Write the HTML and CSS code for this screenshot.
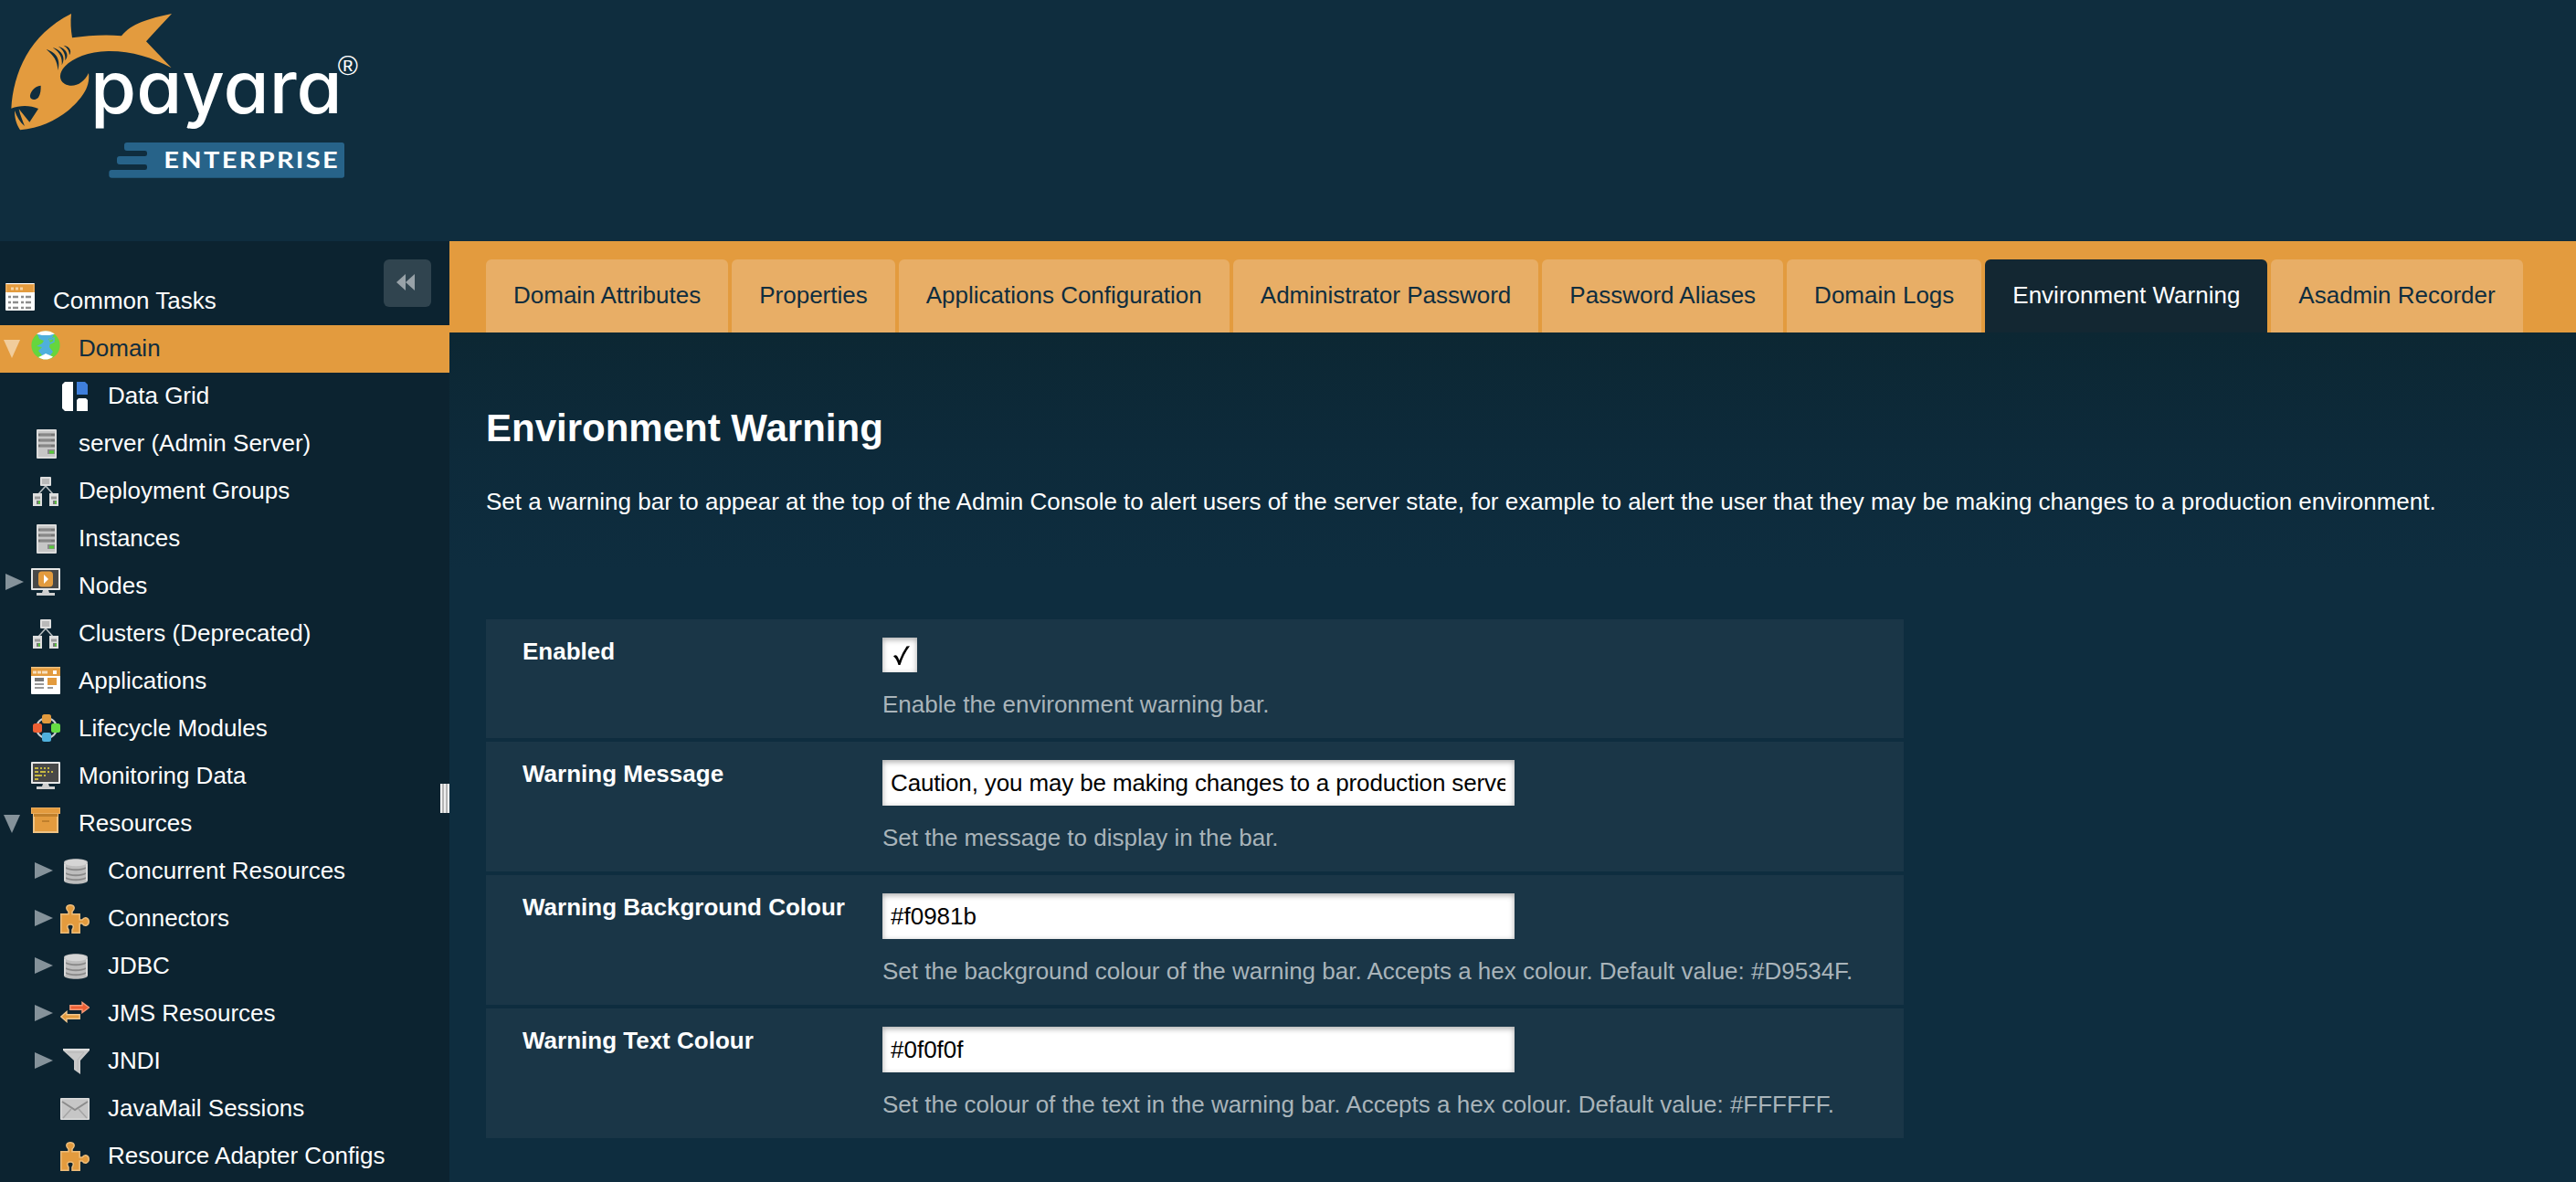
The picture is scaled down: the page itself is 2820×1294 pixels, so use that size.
FILE: index.html
```html
<!DOCTYPE html>
<html lang="en">
<head>
<meta charset="utf-8">
<title>Environment Warning</title>
<link rel="stylesheet" href="styles.css">
</head>
<body>
<svg class="sprite" aria-hidden="true">
  <symbol id="open" viewBox="0 0 34 32"><path d="M4 10H22L13 30Z" fill="currentColor"/></symbol>
  <symbol id="closed" viewBox="0 0 34 32"><path d="M6 6L26 15L6 24Z" fill="currentColor"/></symbol>
  <symbol id="tasks" viewBox="0 0 32 32">
    <rect y="0" width="32" height="30" rx="1" fill="#fff"/><path d="M0 1H32V10H0Z" fill="#e8a95a"/><path d="M2 2H30V10H2Z" fill="#e39b3e"/>
    <path d="M6 6h3M11 6h3M16 6h3" stroke="#f3d3a4" stroke-width="3"/>
    <path d="M3 15h3M8 15h6M17 15h3M22 15h6M3 21h3M8 21h6M17 21h3M22 21h6M3 27h3M8 27h6M17 27h3M22 27h6" stroke="#8d8d8d" stroke-width="2.6"/>
  </symbol>
  <symbol id="globe" viewBox="0 0 32 32">
    <circle cx="16" cy="16" r="15.6" fill="#66d63d"/>
    <path d="M7 4H25L23 8L19 9L21 13L20 18L24 23L21 27H12L8 22L12 18L6 17L12 14L14 11L9 9Z" fill="#4fb0dc"/>
    <path d="M6 3.500C12 -1 20 -1 26 3.500L20 5H12ZM8 29C11 28 14 26 16 25L24 28.500C19 33 12 32 8 29Z" fill="#fff"/>
    <path d="M20 10l5-2v4l-4 2" fill="none" stroke="#4fb0dc" stroke-width="1.500"/>
  </symbol>
  <symbol id="grid" viewBox="0 0 32 32">
    <path d="M5 0H14V32H5L2 29V3Z" fill="#fff"/><path d="M18 0H27L30 3V14H18Z" fill="#3f7fdc"/><path d="M18 20L20 18H28L30 20V32H18Z" fill="#fff"/>
  </symbol>
  <symbol id="server" viewBox="0 0 32 32">
    <rect x="6" width="22" height="32" rx="1" fill="#dcdcdc"/><rect x="8" y="2" width="18" height="28" fill="#c6c6c6"/>
    <path d="M8 6H26M8 12H26M8 18H26" stroke="#777" stroke-width="3"/><path d="M10 6H22M10 12H22M10 18H22" stroke="#999" stroke-width="1"/>
    <rect x="18" y="22" width="8" height="5" fill="#8a8a8a"/><rect x="20" y="23.500" width="5" height="3" fill="#56c937"/>
  </symbol>
  <symbol id="group" viewBox="0 0 32 32">
    <path d="M16 10L8 19M16 10L24 19" stroke="#b5bcbf" stroke-width="1.600"/><rect x="10" width="12" height="10" rx="1" fill="#dedede"/><rect x="12" y="2" width="8" height="6" fill="#b9b9b9"/>
    <rect x="2" y="18" width="10" height="14" fill="#dedede"/><rect x="20" y="18" width="10" height="14" fill="#dedede"/>
    <path d="M4 23H10M22 23H28" stroke="#999" stroke-width="3"/><path d="M6 28H10M24 28H28" stroke="#777" stroke-width="4"/><path d="M8 28H10M26 28H28" stroke="#56c937" stroke-width="3"/>
  </symbol>
  <symbol id="node" viewBox="0 0 32 32">
    <rect y="0" width="32" height="24" rx="1" fill="#e6e6e6"/><rect x="2" y="2" width="28" height="20" fill="#484848"/><rect x="8" y="3.500" width="16" height="17" rx="4" fill="#e39b3e"/><path d="M14 7L19 12L14 17Z" fill="#fff"/>
    <path d="M13 24H19L20 27H26V30H6V27H12Z" fill="#cfcfcf"/>
  </symbol>
  <symbol id="monitor" viewBox="0 0 32 32">
    <rect y="0" width="32" height="24" rx="1" fill="#e6e6e6"/><rect x="2" y="2" width="28" height="20" fill="#484848"/>
    <path d="M4 7h4M10 7h2M14 7h2M18 7h2M4 11h4M10 11h6M18 11h2M22 11h2M4 15h8M14 15h2M4 19h4" stroke="#c6b840" stroke-width="2"/>
    <path d="M13 24H19L20 27H26V30H6V27H12Z" fill="#cfcfcf"/>
  </symbol>
  <symbol id="app" viewBox="0 0 32 32">
    <rect width="32" height="30" rx="1" fill="#fff"/><path d="M0 0H32V10H0Z" fill="#e39b3e"/><path d="M0 .700H32" stroke="#efc283" stroke-width="1.400"/><path d="M2 6h4M7 6h4M12 6h6" stroke="#f7e0bf" stroke-width="3"/><rect x="24" y="4" width="4" height="4" fill="#fff"/>
    <path d="M4 14H14" stroke="#777" stroke-width="4"/><path d="M4 19H14M4 23H14M18 23H24" stroke="#999" stroke-width="2"/><rect x="18" y="12" width="10" height="8" fill="#e39b3e"/>
  </symbol>
  <symbol id="cycle" viewBox="0 0 32 32">
    <circle cx="17" cy="15" r="11" fill="none" stroke="#c8ccce" stroke-width="2"/>
    <rect x="12" y="0" width="10" height="10" rx="2.500" fill="#e39b3e"/><rect x="2" y="10" width="10" height="10" rx="2.500" fill="#ee5f33"/><rect x="22" y="10" width="10" height="10" rx="2.500" fill="#66dd44"/><rect x="12" y="20" width="10" height="10" rx="2.500" fill="#4fb0dc"/>
  </symbol>
  <symbol id="box" viewBox="0 0 32 32">
    <path d="M2 9H30V30H2Z" fill="#efc283"/><path d="M4 9H28V28H4Z" fill="#e39b3e"/><rect y="2" width="32" height="7" fill="#e9ad5f"/><rect x="1" y="3" width="30" height="5" fill="#e39b3e"/><path d="M3 10.500H29" stroke="#bf7f2c" stroke-width="3"/><path d="M12 17H20" stroke="#bf7f2c" stroke-width="2"/>
  </symbol>
  <symbol id="db" viewBox="0 0 32 32">
    <path d="M4 6C4 1 30 1 30 6V26C30 31 4 31 4 26Z" fill="#bdbdbd"/><ellipse cx="17" cy="6.500" rx="12" ry="3.800" fill="#d5d5d5"/>
    <path d="M6 12C11 15 23 15 28 12M6 18C11 21 23 21 28 18M6 23C11 26 23 26 28 23" fill="none" stroke="#898989" stroke-width="1.800"/><path d="M5 8V26M29 8V26" stroke="#dadada" stroke-width="2"/>
  </symbol>
  <symbol id="puzzle" viewBox="0 0 32 32">
    <path d="M.800 10.800H9V8C5 4 7 .800 11 .800S17 4 13 8V10.800H21.200V17H24C27 13 31.200 15 31.200 19S27 25 24 21H21.200V31.200H13V28C16 23 13 22 11 22S6 23 9 28V31.200H.800Z" fill="#e39b3e" stroke="#edbd7b" stroke-width="1.500"/>
  </symbol>
  <symbol id="jms" viewBox="0 0 32 32">
    <path d="M10.800 4.800H24V1.500L31.500 7L24 12.500V9.200H10.800Z" fill="#ee5f33" stroke="#f59a78" stroke-width="1.400"/><path d="M21.200 14.800H7V11.500L.800 17L7 22.500V19.200H21.200Z" fill="#e39b3e" stroke="#f0c78e" stroke-width="1.400"/>
  </symbol>
  <symbol id="funnel" viewBox="0 0 32 32">
    <path d="M3 2H32V4L22 15V30L15 25V15L3 4Z" fill="#c9c9c9"/><path d="M3 3H32" stroke="#e6e6e6" stroke-width="1.500"/><path d="M8 6H26L19 14V26" fill="none" stroke="#b7b7b7"/>
  </symbol>
  <symbol id="mail" viewBox="0 0 32 32">
    <rect y="4" width="32" height="24" rx="1" fill="#dcdcdc"/><rect x="1.500" y="5.500" width="29" height="21" fill="#c6c6c6"/><path d="M2 8L16 17L30 8" fill="none" stroke="#8c8c8c" stroke-width="2"/><path d="M3 26L12 16M29 26L20 16" stroke="#a5a5a5" stroke-width="1.500"/>
  </symbol>
</svg>

<header class="banner">
  <svg class="logo" viewBox="0 0 1260 660" role="img" aria-label="payara enterprise">
    <path fill="#e39b3e" d="M66 427C52 405 48 385 48 363C56 385 66 402 81 414C74 396 66 378 62 358L97 401L126 357C100 345 65 345 37 356C44 240 95 115 234 45C231 72 233 98 237 124C290 117 345 113 399 118C430 78 490 60 564 45C538 74 508 104 480 136L563 223C500 188 430 167 355 168C290 170 240 190 213 218C194 238 192 262 212 275C240 291 275 275 291 240C298 290 262 330 225 362C180 398 130 420 66 427Z"/>
    <path fill="#0f2d3e" d="M134 281C112 283 97 304 99 319C103 330 117 329 126 320C134 306 134 295 134 281ZM152 162C178 170 202 190 190 231C189 200 176 182 152 162ZM173 156C196 163 220 184 203 214C206 190 196 171 173 156ZM191 152C213 158 231 177 214 199C216 180 209 164 191 152ZM209 149C226 151 238 166 228 181C228 168 222 157 209 149Z"/>
    <text class="wordmark" x="297" y="373" textLength="827" lengthAdjust="spacingAndGlyphs">payara</text>
    <text class="registered" x="1109" y="247">®</text>
    <path fill="#276389" d="M417 468H1123Q1131 468 1131 476V576Q1131 584 1123 584H367Q358 584 358 575V567Q358 558 367 558H476Q483 558 483 551V547Q483 540 476 540H393Q384 540 384 531V522Q384 513 393 513H476Q483 513 483 506V502Q483 495 476 495H417Q408 495 408 486V477Q408 468 417 468Z"/>
    <text class="edition" x="538" y="553" textLength="578" lengthAdjust="spacingAndGlyphs">ENTERPRISE</text>
  </svg>
</header>

<div class="layout">
  <nav class="sidebar">
    <button class="collapse" aria-label="Collapse"><svg viewBox="0 0 20 18"><path d="M0 9L10 0V18ZM10 9L20 0V18Z" fill="#98a2a8"/></svg></button>
    <ul class="tree">
      <li class="row root raised"><svg class="icon"><use href="#tasks"/></svg><span>Common Tasks</span></li>
      <li class="row raised selected"><svg class="arrow"><use href="#open"/></svg><svg class="icon"><use href="#globe"/></svg><span>Domain</span></li>
      <li class="row child"><svg class="icon"><use href="#grid"/></svg><span>Data Grid</span></li>
      <li class="row leaf"><svg class="icon"><use href="#server"/></svg><span>server (Admin Server)</span></li>
      <li class="row leaf"><svg class="icon"><use href="#group"/></svg><span>Deployment Groups</span></li>
      <li class="row leaf"><svg class="icon"><use href="#server"/></svg><span>Instances</span></li>
      <li class="row raised"><svg class="arrow"><use href="#closed"/></svg><svg class="icon"><use href="#node"/></svg><span>Nodes</span></li>
      <li class="row leaf"><svg class="icon"><use href="#group"/></svg><span>Clusters (Deprecated)</span></li>
      <li class="row leaf"><svg class="icon"><use href="#app"/></svg><span>Applications</span></li>
      <li class="row leaf"><svg class="icon"><use href="#cycle"/></svg><span>Lifecycle Modules</span></li>
      <li class="row leaf"><svg class="icon"><use href="#monitor"/></svg><span>Monitoring Data</span></li>
      <li class="row raised"><svg class="arrow"><use href="#open"/></svg><svg class="icon"><use href="#box"/></svg><span>Resources</span></li>
      <li class="row branch"><svg class="arrow"><use href="#closed"/></svg><svg class="icon"><use href="#db"/></svg><span>Concurrent Resources</span></li>
      <li class="row branch"><svg class="arrow"><use href="#closed"/></svg><svg class="icon"><use href="#puzzle"/></svg><span>Connectors</span></li>
      <li class="row branch"><svg class="arrow"><use href="#closed"/></svg><svg class="icon"><use href="#db"/></svg><span>JDBC</span></li>
      <li class="row branch"><svg class="arrow"><use href="#closed"/></svg><svg class="icon jms"><use href="#jms"/></svg><span>JMS Resources</span></li>
      <li class="row branch"><svg class="arrow"><use href="#closed"/></svg><svg class="icon"><use href="#funnel"/></svg><span>JNDI</span></li>
      <li class="row child"><svg class="icon"><use href="#mail"/></svg><span>JavaMail Sessions</span></li>
      <li class="row child"><svg class="icon"><use href="#puzzle"/></svg><span>Resource Adapter Configs</span></li>
    </ul>
    <div class="splitter"></div>
  </nav>

  <main class="main">
    <div class="tabs">
      <a class="tab">Domain Attributes</a>
      <a class="tab">Properties</a>
      <a class="tab">Applications Configuration</a>
      <a class="tab">Administrator Password</a>
      <a class="tab">Password Aliases</a>
      <a class="tab">Domain Logs</a>
      <a class="tab active">Environment Warning</a>
      <a class="tab">Asadmin Recorder</a>
    </div>
    <section class="content">
      <h1>Environment Warning</h1>
      <p class="intro">Set a warning bar to appear at the top of the Admin Console to alert users of the server state, for example to alert the user that they may be making changes to a production environment.</p>
      <div class="form">
        <div class="field">
          <label class="label">Enabled</label>
          <div class="control">
            <div class="checkbox"><svg viewBox="0 0 38 38"><path d="M12 20.500Q14 18.500 16 20Q17.500 22 18.500 25Q22 16 26.500 9.500L30 9.300Q23 18.500 19.500 30H17.500Q15.500 23 12 20.500Z" fill="#000"/></svg></div>
            <p class="help">Enable the environment warning bar.</p>
          </div>
        </div>
        <div class="field">
          <label class="label">Warning Message</label>
          <div class="control">
            <input class="input message" type="text" value="Caution, you may be making changes to a production server">
            <p class="help">Set the message to display in the bar.</p>
          </div>
        </div>
        <div class="field">
          <label class="label">Warning Background Colour</label>
          <div class="control">
            <input class="input" type="text" value="#f0981b">
            <p class="help">Set the background colour of the warning bar. Accepts a hex colour. Default value: #D9534F.</p>
          </div>
        </div>
        <div class="field">
          <label class="label">Warning Text Colour</label>
          <div class="control">
            <input class="input" type="text" value="#0f0f0f">
            <p class="help">Set the colour of the text in the warning bar. Accepts a hex colour. Default value: #FFFFFF.</p>
          </div>
        </div>
      </div>
    </section>
  </main>
</div>
</body>
</html>
```
FILE: styles.css
```css
* { box-sizing: border-box; }

body {
  margin: 0;
  height: 1294px;
  display: flex;
  flex-direction: column;
  overflow: hidden;
  background: #0e2d3f;
  color: #fff;
  font: 26px/50px "Liberation Sans", Arial, sans-serif;
}

.sprite { position: absolute; width: 0; height: 0; }

.banner { height: 264px; flex: none; background: #0f2d3e; }
.logo { display: block; width: 420px; height: 220px; }
.wordmark { font: 500 240px Inter, sans-serif; font-feature-settings: "cv11"; fill: #fff; }
.registered { font: 90px "Liberation Sans", sans-serif; fill: #fff; }
.edition { font: bold 75px Lato, sans-serif; letter-spacing: 6px; fill: #fff; }

.layout { flex: 1; min-height: 0; display: flex; }

.sidebar {
  position: relative;
  flex: none;
  width: 492px;
  padding-top: 40px;
  background: #0c2330;
}
.collapse {
  position: absolute;
  top: 20px;
  right: 20px;
  width: 52px;
  height: 52px;
  display: flex;
  align-items: center;
  justify-content: center;
  padding: 0 4px 2px 0;
  border: 0;
  border-radius: 6px;
  background: #30444f;
}
.collapse svg { width: 20px; height: 18px; }
.splitter {
  position: absolute;
  top: 594px;
  right: 0;
  width: 10px;
  height: 32px;
  background: linear-gradient(90deg, #efefef 2px, #b4b4b4 2px 4px, #efefef 4px 6px, #b4b4b4 6px 8px, #efefef 8px);
}

.tree { margin: 0; padding: 0; list-style: none; }
.row {
  display: flex;
  align-items: flex-start;
  height: 52px;
  color: #fff;
  white-space: nowrap;
}
.row .icon { flex: none; width: 32px; height: 32px; margin: 10px 20px 0 0; }
.row .arrow { flex: none; width: 34px; height: 32px; margin-top: 10px; color: #85929a; }
.row.raised .icon, .row.raised .arrow { margin-top: 6px; }
.row .icon.jms { margin-top: 12px; }
.row.root { padding-left: 6px; }
.row.leaf { padding-left: 34px; }
.row.branch { padding-left: 32px; }
.row.child { padding-left: 66px; }
.row.selected { background: #e39b3e; color: #0f2d3e; }
.row.selected .arrow { color: #f1cd9c; }

.main {
  flex: 1;
  min-width: 0;
  background: linear-gradient(#0c2733 100px, #0d2a3a 220px, #0e2d3f 360px);
}
.tabs {
  display: flex;
  gap: 4px;
  height: 100px;
  padding: 20px 0 0 40px;
  background: #e39b3e;
}
.tab {
  height: 80px;
  padding: 0 30px;
  line-height: 78px;
  border-radius: 6px 6px 0 0;
  background: #e8ae66;
  color: #0f2d3e;
  white-space: nowrap;
}
.tab.active { background: #132732; color: #fff; }

.content { padding: 80px 40px 0; }
h1 { margin: 0; font-size: 42px; line-height: 50px; }
.intro { margin: 30px 0 0; line-height: 50px; white-space: nowrap; }

.form { width: 1552px; margin-top: 104px; display: grid; gap: 4px; }
.field { display: flex; height: 142px; padding: 20px 40px 0; background: #1a3647; }
.field:first-child { height: 130px; }
.label { width: 394px; line-height: 30px; font-weight: bold; }
.input {
  display: block;
  width: 692px;
  height: 50px;
  padding: 0 10px 0 9px;
  border: 0;
  border-radius: 0;
  background: #fff;
  box-shadow: inset 0 2px 6px rgba(0, 0, 0, .35);
  color: #000;
  font: inherit;
}
.input.message { letter-spacing: -.14px; }
.checkbox { width: 38px; height: 38px; background: #fff; box-shadow: inset 0 2px 6px rgba(0, 0, 0, .35); }
.checkbox svg { display: block; }
.help { margin: 19px 0 0; line-height: 32px; color: #a9b4ba; white-space: nowrap; }
```
